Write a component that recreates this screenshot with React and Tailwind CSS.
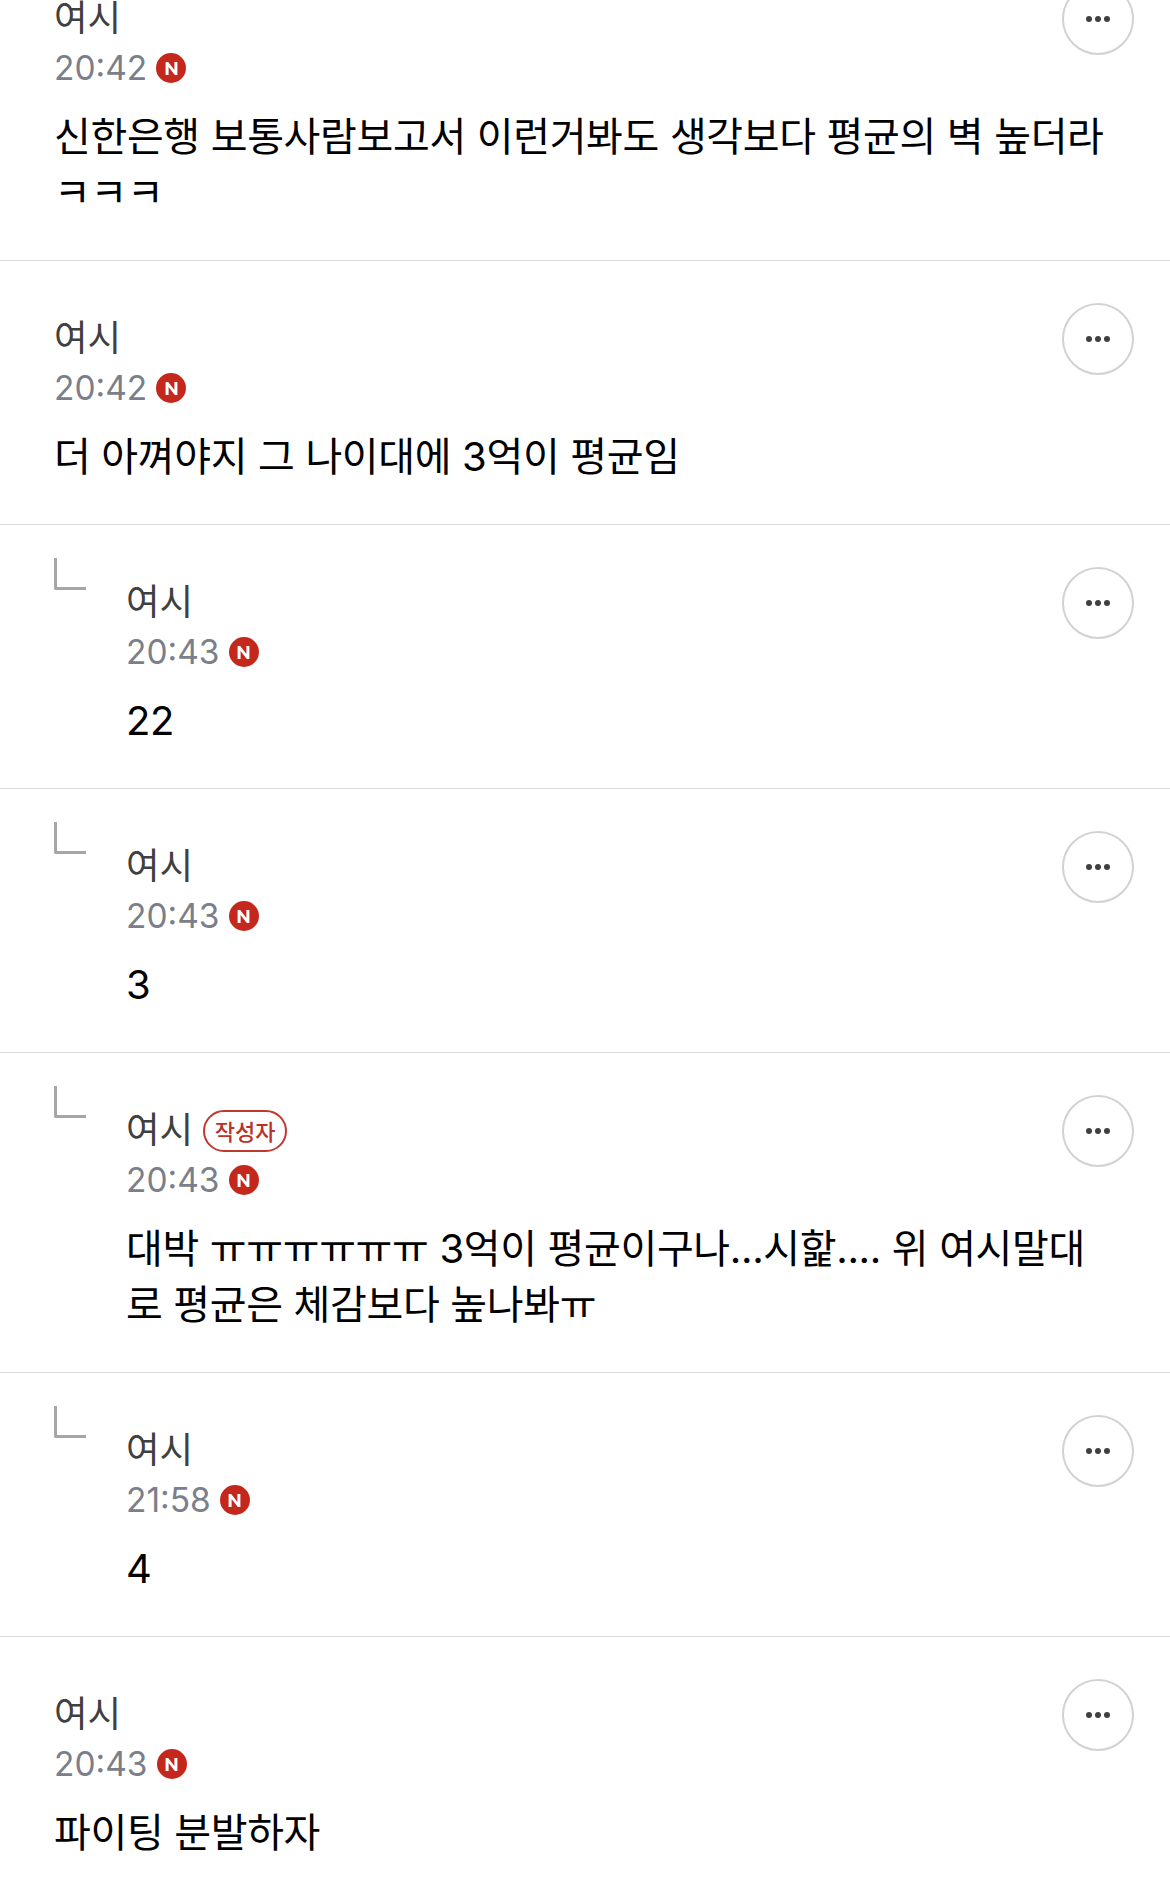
const rows = [
  { time: "20:42", text: "신한은행 보통사람보고서 이런거봐도 생각보다 평균의 벽 높더라 ㅋㅋㅋ", two: true },
  { time: "20:42", text: "더 아껴야지 그 나이대에 3억이 평균임" },
  { time: "20:43", text: "22", reply: true },
  { time: "20:43", text: "3", reply: true },
  { time: "20:43", text: "대박 ㅠㅠㅠㅠㅠㅠ 3억이 평균이구나...시핥.... 위 여시말대로 평균은 체감보다 높나봐ㅠ", reply: true, two: true, author: true },
  { time: "21:58", text: "4", reply: true },
  { time: "20:43", text: "파이팅 분발하자" },
];

function NBadge() {
  return (
    <span className="ml-[9px] flex h-[30px] w-[30px] items-center justify-center rounded-full bg-[#c4281c]">
      <svg width="15" height="15" viewBox="0 0 14 14">
        <path d="M1.5 13V1h2.4l5.8 7.4V1h2.8v12H10.1L4.3 5.6V13z" fill="#fff" />
      </svg>
    </span>
  );
}

function Row({ reply, author, time, text, two }) {
  return (
    <div className={`relative flex border-b border-[#dcdcdc] pt-[55px] pr-[36px] ${two ? "h-[320px]" : "h-[264px]"} ${reply ? "pl-[126px]" : "pl-[54px]"}`}>
      {reply && (
        <span className="absolute left-[54px] top-[33px] h-[32px] w-[32px] rounded-bl-[2px] border-b-[3px] border-l-[3px] border-[#a6a6a6]" />
      )}
      <div className="min-w-0 flex-1">
        <div className="flex h-[40px] items-center">
          <span className="font-['Noto_Sans_CJK_KR',sans-serif] text-[36.5px] leading-[40px] text-[#404040]">여시</span>
          {author && (
            <span className="ml-[10px] mt-[5px] flex h-[42px] w-[84px] items-center justify-center rounded-full border-[2px] border-[#c0392f] font-['Noto_Sans_CJK_KR',sans-serif] text-[22px] font-medium text-[#b8322a]">작성자</span>
          )}
        </div>
        <div className="mt-[12px] flex h-[40px] items-center">
          <span className="font-['Inter',sans-serif] text-[33.5px] leading-[40px] text-[#7b7f8a]">{time}</span>
          <NBadge />
        </div>
        <p className="mt-[21px] pr-[24px] font-['Inter','Noto_Sans_CJK_KR',sans-serif] text-[40px] leading-[56px] tracking-[-0.35px] text-black">{text}</p>
      </div>
      <button className="absolute right-[36px] top-[42px] flex h-[72px] w-[72px] items-center justify-center gap-[3px] rounded-full border-[2px] border-[#d2d2d2] bg-white">
        <span className="h-[6px] w-[6px] rounded-full bg-[#404040]" />
        <span className="h-[6px] w-[6px] rounded-full bg-[#404040]" />
        <span className="h-[6px] w-[6px] rounded-full bg-[#404040]" />
      </button>
    </div>
  );
}

export default function App() {
  return (
    <div className="h-[1895px] overflow-hidden bg-white">
      <div className="-mt-[59px]">
        {rows.map((r, i) => (
          <Row key={i} {...r} />
        ))}
      </div>
    </div>
  );
}
